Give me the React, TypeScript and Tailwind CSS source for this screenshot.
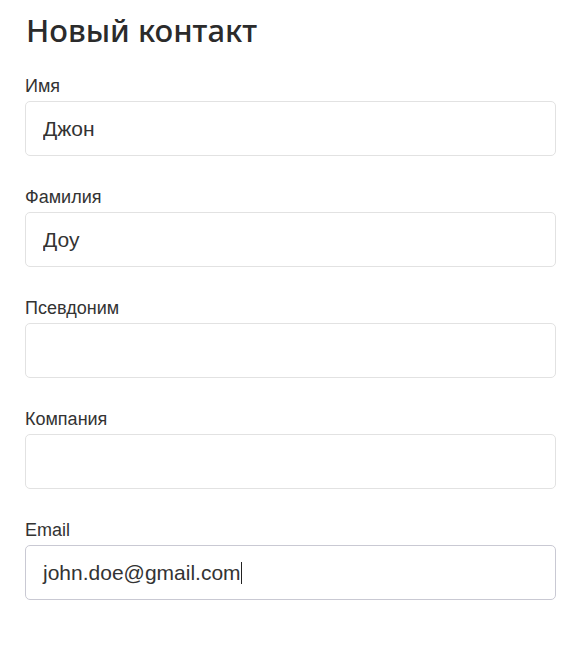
import React from 'react';

const fields = [
  { label: 'Имя', value: 'Джон' },
  { label: 'Фамилия', value: 'Доу' },
  { label: 'Псевдоним', value: '' },
  { label: 'Компания', value: '' },
];

const App: React.FC = () => {
  return (
    <div className="min-h-screen bg-white px-[25px] pt-[10px] text-[#333]" style={{ fontFamily: '"Liberation Sans", Arial, sans-serif' }}>
      <h1 className="h-10 pl-px text-[31px] leading-10 font-medium text-[#2b2b2b]" style={{ fontFamily: '"Noto Sans", sans-serif' }}>
        Новый контакт
      </h1>

      <div className="mt-6 w-[531px]">
        {fields.map((f) => (
          <div key={f.label} className="mb-[29px]">
            <label className="block h-6 text-[18px] leading-6 text-[#333]">{f.label}</label>
            <input
              type="text"
              readOnly
              value={f.value}
              className="mt-[3px] block h-[55px] w-full rounded-[5px] border border-[#e2e2e2] px-[17px] text-[21px] text-[#333] outline-none"
            />
          </div>
        ))}

        {/* focused email field */}
        <div>
          <label className="block h-6 text-[18px] leading-6 text-[#333]">Email</label>
          <div className="mt-[3px] flex h-[55px] w-full items-center rounded-[5px] border border-[#c9c9d3] px-[17px] text-[21px] text-[#333]">
            <span>john.doe@gmail.com</span>
            <span className="inline-block h-[22px] w-px bg-[#222]" />
          </div>
        </div>
      </div>
    </div>
  );
};

export default App;
